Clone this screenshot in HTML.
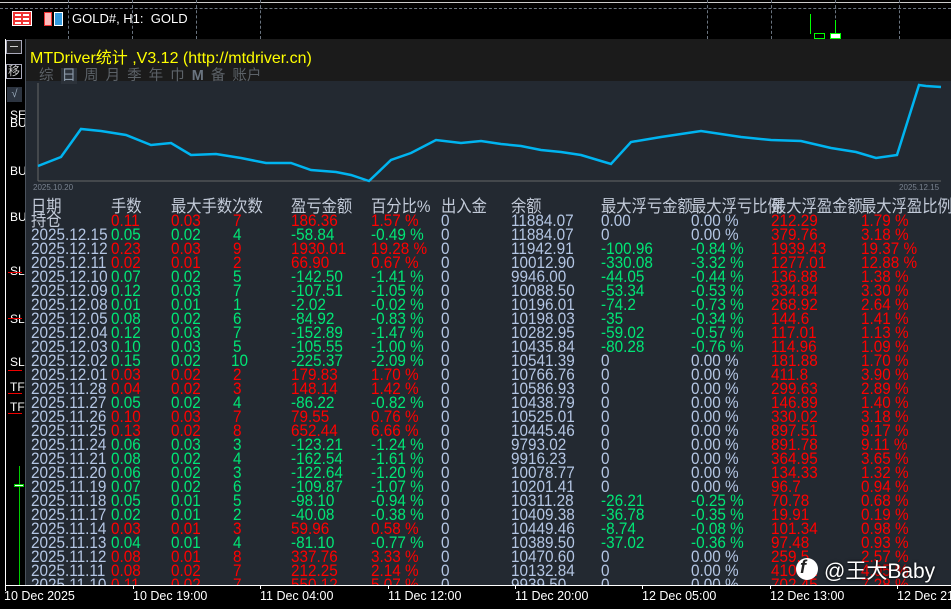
<!DOCTYPE html>
<html><head><meta charset="utf-8"><style>
*{margin:0;padding:0;box-sizing:border-box}
body{width:951px;height:609px;background:#000;position:relative;overflow:hidden;font-family:"Liberation Sans","Noto Sans CJK SC",sans-serif}
.a{position:absolute;white-space:nowrap}
.vd{position:absolute;top:0;height:39px;border-left:1px dashed #6a7480}
#panel{position:absolute;left:25px;top:39px;width:926px;height:546px;background:#232931;border-left:1px solid #4a525c;overflow:hidden}
.r{position:absolute;left:0;height:14px;width:926px;font-size:17px;line-height:14px}
.r span{position:absolute;top:0;transform:scaleX(0.9);transform-origin:left;white-space:nowrap}
.b{color:#b4c6e4}.g{color:#00e676}.d{color:#ff0000}
.h{color:#c2cad8}
.t{position:absolute;top:589px;color:#fff;font-size:12.5px;white-space:nowrap}
</style></head><body>
<div class="a" style="left:0;top:2px;width:951px;height:1px;background:#ccc"></div>
<div class="a" style="left:0;top:8px;width:951px;border-top:1px dashed #6a7480"></div>
<div class="vd" style="left:68px"></div><div class="vd" style="left:132px"></div><div class="vd" style="left:196px"></div><div class="vd" style="left:260px"></div><div class="vd" style="left:707px"></div><div class="vd" style="left:771px"></div><div class="vd" style="left:835px"></div><div class="vd" style="left:899px"></div>
<div class="a" style="left:12px;top:11px;width:20px;height:15px;background:#e33;border:1px solid #fff"></div>
<div class="a" style="left:15px;top:14px;width:6px;height:2px;background:#fff;box-shadow:0 4px #fff,0 8px #fff,8px 0 #fff,8px 4px #fff,8px 8px #fff"></div>
<div class="a" style="left:44px;top:12px;width:8px;height:14px;background:#fbb;border:1px solid #e33"></div>
<div class="a" style="left:54px;top:12px;width:9px;height:14px;background:#39d;border:1px solid #fff"></div>
<div class="a" style="left:72px;top:11px;color:#fff;font-size:13px">GOLD#, H1:&nbsp; GOLD</div>
<div class="a" style="left:810px;top:14px;width:1px;height:20px;background:#0f0"></div>
<div class="a" style="left:814px;top:33px;width:11px;height:6px;border:1px solid #0f0"></div>
<div class="a" style="left:830px;top:33px;width:11px;height:6px;border:1px solid #0f0;background:#fff"></div>
<div class="a" style="left:835px;top:20px;width:1px;height:13px;background:#0f0"></div>
<div class="a" style="left:5px;top:39px;width:1px;height:546px;background:#fff"></div>
<div class="a" style="left:6px;top:40px;width:16px;height:14px;border:1px solid #aab;background:#222"></div>
<div class="a" style="left:10px;top:46px;width:8px;height:1px;background:#ccc"></div>
<div class="a" style="left:6px;top:64px;width:16px;height:15px;border:1px solid #aab;color:#ccc;font-size:12px;line-height:13px;text-align:center">移</div>
<div class="a" style="left:7px;top:87px;width:15px;height:15px;background:#2c3440;color:#9ab;font-size:11px;line-height:15px;text-align:center">√</div>
<div class="a" style="left:10px;top:108px;color:#fff;font-size:12px">SE</div>
<div class="a" style="left:10px;top:116px;color:#fff;font-size:12px">BU</div>
<div class="a" style="left:10px;top:164px;color:#fff;font-size:12px">BU</div>
<div class="a" style="left:10px;top:210px;color:#fff;font-size:12px">BU</div>
<div class="a" style="left:10px;top:264px;color:#fff;font-size:12px">SL</div>
<div class="a" style="left:10px;top:312px;color:#fff;font-size:12px">SL</div>
<div class="a" style="left:10px;top:355px;color:#fff;font-size:12px">SL</div>
<div class="a" style="left:10px;top:380px;color:#fff;font-size:12px">TF</div>
<div class="a" style="left:10px;top:400px;color:#fff;font-size:12px">TF</div>
<div class="a" style="left:8px;top:272px;width:14px;height:1px;background:#e00"></div>
<div class="a" style="left:8px;top:318px;width:14px;height:1px;background:#e00"></div>
<div class="a" style="left:8px;top:370px;width:14px;height:1px;background:#e00"></div>
<div class="a" style="left:8px;top:393px;width:14px;height:1px;background:#e00"></div>
<div class="a" style="left:8px;top:413px;width:14px;height:1px;background:#e00"></div>
<div class="a" style="left:19px;top:466px;width:1px;height:120px;background:#0c0"></div>
<div class="a" style="left:14px;top:484px;width:10px;height:3px;background:#fff;border:1px solid #0c0"></div>

<div id="panel">
<div class="a" style="left:0;top:0;width:926px;height:42px;background:#1b1b1b"></div>
<div class="a" style="left:4px;top:5px;color:#ffff00;font-size:16px">MTDriver统计 ,V3.12 (http://mtdriver.cn)</div>
<div class="a" style="left:13px;top:25px;color:#5c6268;font-size:14.5px;word-spacing:3px">综 <span style="background:#2c323a;color:#8a98a8;padding:0 1px">日</span> 周 月 季 年 巾 <b style="color:#6a7480">M</b> 备 账户</div>
<svg class="a" style="left:0;top:42px" width="926" height="160">
<line x1="12" y1="2" x2="12" y2="100" stroke="#666" stroke-width="1"/>
<line x1="12" y1="100" x2="915" y2="100" stroke="#666" stroke-width="1"/>
<polyline fill="none" stroke="#00b4f0" stroke-width="2.5" points="12,85 35,76 55,48 75,50 100,54 125,64 145,62 165,74 190,73 215,77 240,82 265,82 285,89 310,91 325,94 343,100 365,79 385,72 410,59 435,62 455,60 475,63 495,65 515,69 535,71 555,74 575,80 585,83 605,61 635,56 675,50 715,56 745,59 775,60 805,67 830,71 850,77 871,74 893,4 900,5 915,6"/>
</svg>
<div class="a" style="left:7px;top:144px;color:#7a8390;font-size:8px">2025.10.20</div>
<div class="a" style="left:873px;top:144px;color:#7a8390;font-size:8px">2025.12.15</div>

<div class="r h" style="top:161px"><span style="left:5px">日期</span><span style="left:85px">手数</span><span style="left:145px">最大手数次数</span><span style="left:265px">盈亏金额</span><span style="left:345px">百分比%</span><span style="left:415px">出入金</span><span style="left:485px">余额</span><span style="left:575px">最大浮亏金额</span><span style="left:665px">最大浮亏比例</span><span style="left:745px">最大浮盈金额</span><span style="left:835px">最大浮盈比例</span></div>

<div class="r" style="top:175px"><span class="h" style="left:5px">持仓</span><span class="d" style="left:85px">0.11</span><span class="d" style="left:145px">0.03</span><span class="d" style="left:207px">7</span><span class="d" style="left:265px">186.36</span><span class="d" style="left:345px">1.57 %</span><span class="b" style="left:415px">0</span><span class="b" style="left:485px">11884.07</span><span class="b" style="left:575px">0.00</span><span class="b" style="left:665px">0.00 %</span><span class="d" style="left:745px">212.29</span><span class="d" style="left:835px">1.79 %</span></div>
<div class="r" style="top:189px"><span class="b" style="left:5px">2025.12.15</span><span class="g" style="left:85px">0.05</span><span class="g" style="left:145px">0.02</span><span class="g" style="left:207px">4</span><span class="g" style="left:265px">-58.84</span><span class="g" style="left:345px">-0.49 %</span><span class="b" style="left:415px">0</span><span class="b" style="left:485px">11884.07</span><span class="b" style="left:575px">0</span><span class="b" style="left:665px">0.00 %</span><span class="d" style="left:745px">379.76</span><span class="d" style="left:835px">3.18 %</span></div>
<div class="r" style="top:203px"><span class="b" style="left:5px">2025.12.12</span><span class="d" style="left:85px">0.23</span><span class="d" style="left:145px">0.03</span><span class="d" style="left:207px">9</span><span class="d" style="left:265px">1930.01</span><span class="d" style="left:345px">19.28 %</span><span class="b" style="left:415px">0</span><span class="b" style="left:485px">11942.91</span><span class="g" style="left:575px">-100.96</span><span class="g" style="left:665px">-0.84 %</span><span class="d" style="left:745px">1939.43</span><span class="d" style="left:835px">19.37 %</span></div>
<div class="r" style="top:217px"><span class="b" style="left:5px">2025.12.11</span><span class="d" style="left:85px">0.02</span><span class="d" style="left:145px">0.01</span><span class="d" style="left:207px">2</span><span class="d" style="left:265px">66.90</span><span class="d" style="left:345px">0.67 %</span><span class="b" style="left:415px">0</span><span class="b" style="left:485px">10012.90</span><span class="g" style="left:575px">-330.08</span><span class="g" style="left:665px">-3.32 %</span><span class="d" style="left:745px">1277.01</span><span class="d" style="left:835px">12.88 %</span></div>
<div class="r" style="top:231px"><span class="b" style="left:5px">2025.12.10</span><span class="g" style="left:85px">0.07</span><span class="g" style="left:145px">0.02</span><span class="g" style="left:207px">5</span><span class="g" style="left:265px">-142.50</span><span class="g" style="left:345px">-1.41 %</span><span class="b" style="left:415px">0</span><span class="b" style="left:485px">9946.00</span><span class="g" style="left:575px">-44.05</span><span class="g" style="left:665px">-0.44 %</span><span class="d" style="left:745px">136.88</span><span class="d" style="left:835px">1.38 %</span></div>
<div class="r" style="top:245px"><span class="b" style="left:5px">2025.12.09</span><span class="g" style="left:85px">0.12</span><span class="g" style="left:145px">0.03</span><span class="g" style="left:207px">7</span><span class="g" style="left:265px">-107.51</span><span class="g" style="left:345px">-1.05 %</span><span class="b" style="left:415px">0</span><span class="b" style="left:485px">10088.50</span><span class="g" style="left:575px">-53.34</span><span class="g" style="left:665px">-0.53 %</span><span class="d" style="left:745px">334.84</span><span class="d" style="left:835px">3.30 %</span></div>
<div class="r" style="top:259px"><span class="b" style="left:5px">2025.12.08</span><span class="g" style="left:85px">0.01</span><span class="g" style="left:145px">0.01</span><span class="g" style="left:207px">1</span><span class="g" style="left:265px">-2.02</span><span class="g" style="left:345px">-0.02 %</span><span class="b" style="left:415px">0</span><span class="b" style="left:485px">10196.01</span><span class="g" style="left:575px">-74.2</span><span class="g" style="left:665px">-0.73 %</span><span class="d" style="left:745px">268.92</span><span class="d" style="left:835px">2.64 %</span></div>
<div class="r" style="top:273px"><span class="b" style="left:5px">2025.12.05</span><span class="g" style="left:85px">0.08</span><span class="g" style="left:145px">0.02</span><span class="g" style="left:207px">6</span><span class="g" style="left:265px">-84.92</span><span class="g" style="left:345px">-0.83 %</span><span class="b" style="left:415px">0</span><span class="b" style="left:485px">10198.03</span><span class="g" style="left:575px">-35</span><span class="g" style="left:665px">-0.34 %</span><span class="d" style="left:745px">144.6</span><span class="d" style="left:835px">1.41 %</span></div>
<div class="r" style="top:287px"><span class="b" style="left:5px">2025.12.04</span><span class="g" style="left:85px">0.12</span><span class="g" style="left:145px">0.03</span><span class="g" style="left:207px">7</span><span class="g" style="left:265px">-152.89</span><span class="g" style="left:345px">-1.47 %</span><span class="b" style="left:415px">0</span><span class="b" style="left:485px">10282.95</span><span class="g" style="left:575px">-59.02</span><span class="g" style="left:665px">-0.57 %</span><span class="d" style="left:745px">117.01</span><span class="d" style="left:835px">1.13 %</span></div>
<div class="r" style="top:301px"><span class="b" style="left:5px">2025.12.03</span><span class="g" style="left:85px">0.10</span><span class="g" style="left:145px">0.03</span><span class="g" style="left:207px">5</span><span class="g" style="left:265px">-105.55</span><span class="g" style="left:345px">-1.00 %</span><span class="b" style="left:415px">0</span><span class="b" style="left:485px">10435.84</span><span class="g" style="left:575px">-80.28</span><span class="g" style="left:665px">-0.76 %</span><span class="d" style="left:745px">114.96</span><span class="d" style="left:835px">1.09 %</span></div>
<div class="r" style="top:315px"><span class="b" style="left:5px">2025.12.02</span><span class="g" style="left:85px">0.15</span><span class="g" style="left:145px">0.02</span><span class="g" style="left:205px">10</span><span class="g" style="left:265px">-225.37</span><span class="g" style="left:345px">-2.09 %</span><span class="b" style="left:415px">0</span><span class="b" style="left:485px">10541.39</span><span class="b" style="left:575px">0</span><span class="b" style="left:665px">0.00 %</span><span class="d" style="left:745px">181.88</span><span class="d" style="left:835px">1.70 %</span></div>
<div class="r" style="top:329px"><span class="b" style="left:5px">2025.12.01</span><span class="d" style="left:85px">0.03</span><span class="d" style="left:145px">0.02</span><span class="d" style="left:207px">2</span><span class="d" style="left:265px">179.83</span><span class="d" style="left:345px">1.70 %</span><span class="b" style="left:415px">0</span><span class="b" style="left:485px">10766.76</span><span class="b" style="left:575px">0</span><span class="b" style="left:665px">0.00 %</span><span class="d" style="left:745px">411.8</span><span class="d" style="left:835px">3.90 %</span></div>
<div class="r" style="top:343px"><span class="b" style="left:5px">2025.11.28</span><span class="d" style="left:85px">0.04</span><span class="d" style="left:145px">0.02</span><span class="d" style="left:207px">3</span><span class="d" style="left:265px">148.14</span><span class="d" style="left:345px">1.42 %</span><span class="b" style="left:415px">0</span><span class="b" style="left:485px">10586.93</span><span class="b" style="left:575px">0</span><span class="b" style="left:665px">0.00 %</span><span class="d" style="left:745px">299.63</span><span class="d" style="left:835px">2.89 %</span></div>
<div class="r" style="top:357px"><span class="b" style="left:5px">2025.11.27</span><span class="g" style="left:85px">0.05</span><span class="g" style="left:145px">0.02</span><span class="g" style="left:207px">4</span><span class="g" style="left:265px">-86.22</span><span class="g" style="left:345px">-0.82 %</span><span class="b" style="left:415px">0</span><span class="b" style="left:485px">10438.79</span><span class="b" style="left:575px">0</span><span class="b" style="left:665px">0.00 %</span><span class="d" style="left:745px">146.89</span><span class="d" style="left:835px">1.40 %</span></div>
<div class="r" style="top:371px"><span class="b" style="left:5px">2025.11.26</span><span class="d" style="left:85px">0.10</span><span class="d" style="left:145px">0.03</span><span class="d" style="left:207px">7</span><span class="d" style="left:265px">79.55</span><span class="d" style="left:345px">0.76 %</span><span class="b" style="left:415px">0</span><span class="b" style="left:485px">10525.01</span><span class="b" style="left:575px">0</span><span class="b" style="left:665px">0.00 %</span><span class="d" style="left:745px">330.02</span><span class="d" style="left:835px">3.18 %</span></div>
<div class="r" style="top:385px"><span class="b" style="left:5px">2025.11.25</span><span class="d" style="left:85px">0.13</span><span class="d" style="left:145px">0.02</span><span class="d" style="left:207px">8</span><span class="d" style="left:265px">652.44</span><span class="d" style="left:345px">6.66 %</span><span class="b" style="left:415px">0</span><span class="b" style="left:485px">10445.46</span><span class="b" style="left:575px">0</span><span class="b" style="left:665px">0.00 %</span><span class="d" style="left:745px">897.51</span><span class="d" style="left:835px">9.17 %</span></div>
<div class="r" style="top:399px"><span class="b" style="left:5px">2025.11.24</span><span class="g" style="left:85px">0.06</span><span class="g" style="left:145px">0.03</span><span class="g" style="left:207px">3</span><span class="g" style="left:265px">-123.21</span><span class="g" style="left:345px">-1.24 %</span><span class="b" style="left:415px">0</span><span class="b" style="left:485px">9793.02</span><span class="b" style="left:575px">0</span><span class="b" style="left:665px">0.00 %</span><span class="d" style="left:745px">891.78</span><span class="d" style="left:835px">9.11 %</span></div>
<div class="r" style="top:413px"><span class="b" style="left:5px">2025.11.21</span><span class="g" style="left:85px">0.08</span><span class="g" style="left:145px">0.02</span><span class="g" style="left:207px">4</span><span class="g" style="left:265px">-162.54</span><span class="g" style="left:345px">-1.61 %</span><span class="b" style="left:415px">0</span><span class="b" style="left:485px">9916.23</span><span class="b" style="left:575px">0</span><span class="b" style="left:665px">0.00 %</span><span class="d" style="left:745px">364.95</span><span class="d" style="left:835px">3.65 %</span></div>
<div class="r" style="top:427px"><span class="b" style="left:5px">2025.11.20</span><span class="g" style="left:85px">0.06</span><span class="g" style="left:145px">0.02</span><span class="g" style="left:207px">3</span><span class="g" style="left:265px">-122.64</span><span class="g" style="left:345px">-1.20 %</span><span class="b" style="left:415px">0</span><span class="b" style="left:485px">10078.77</span><span class="b" style="left:575px">0</span><span class="b" style="left:665px">0.00 %</span><span class="d" style="left:745px">134.33</span><span class="d" style="left:835px">1.32 %</span></div>
<div class="r" style="top:441px"><span class="b" style="left:5px">2025.11.19</span><span class="g" style="left:85px">0.07</span><span class="g" style="left:145px">0.02</span><span class="g" style="left:207px">6</span><span class="g" style="left:265px">-109.87</span><span class="g" style="left:345px">-1.07 %</span><span class="b" style="left:415px">0</span><span class="b" style="left:485px">10201.41</span><span class="b" style="left:575px">0</span><span class="b" style="left:665px">0.00 %</span><span class="d" style="left:745px">96.7</span><span class="d" style="left:835px">0.94 %</span></div>
<div class="r" style="top:455px"><span class="b" style="left:5px">2025.11.18</span><span class="g" style="left:85px">0.05</span><span class="g" style="left:145px">0.01</span><span class="g" style="left:207px">5</span><span class="g" style="left:265px">-98.10</span><span class="g" style="left:345px">-0.94 %</span><span class="b" style="left:415px">0</span><span class="b" style="left:485px">10311.28</span><span class="g" style="left:575px">-26.21</span><span class="g" style="left:665px">-0.25 %</span><span class="d" style="left:745px">70.78</span><span class="d" style="left:835px">0.68 %</span></div>
<div class="r" style="top:469px"><span class="b" style="left:5px">2025.11.17</span><span class="g" style="left:85px">0.02</span><span class="g" style="left:145px">0.01</span><span class="g" style="left:207px">2</span><span class="g" style="left:265px">-40.08</span><span class="g" style="left:345px">-0.38 %</span><span class="b" style="left:415px">0</span><span class="b" style="left:485px">10409.38</span><span class="g" style="left:575px">-36.78</span><span class="g" style="left:665px">-0.35 %</span><span class="d" style="left:745px">19.91</span><span class="d" style="left:835px">0.19 %</span></div>
<div class="r" style="top:483px"><span class="b" style="left:5px">2025.11.14</span><span class="d" style="left:85px">0.03</span><span class="d" style="left:145px">0.01</span><span class="d" style="left:207px">3</span><span class="d" style="left:265px">59.96</span><span class="d" style="left:345px">0.58 %</span><span class="b" style="left:415px">0</span><span class="b" style="left:485px">10449.46</span><span class="g" style="left:575px">-8.74</span><span class="g" style="left:665px">-0.08 %</span><span class="d" style="left:745px">101.34</span><span class="d" style="left:835px">0.98 %</span></div>
<div class="r" style="top:497px"><span class="b" style="left:5px">2025.11.13</span><span class="g" style="left:85px">0.04</span><span class="g" style="left:145px">0.01</span><span class="g" style="left:207px">4</span><span class="g" style="left:265px">-81.10</span><span class="g" style="left:345px">-0.77 %</span><span class="b" style="left:415px">0</span><span class="b" style="left:485px">10389.50</span><span class="g" style="left:575px">-37.02</span><span class="g" style="left:665px">-0.36 %</span><span class="d" style="left:745px">97.48</span><span class="d" style="left:835px">0.93 %</span></div>
<div class="r" style="top:511px"><span class="b" style="left:5px">2025.11.12</span><span class="d" style="left:85px">0.08</span><span class="d" style="left:145px">0.01</span><span class="d" style="left:207px">8</span><span class="d" style="left:265px">337.76</span><span class="d" style="left:345px">3.33 %</span><span class="b" style="left:415px">0</span><span class="b" style="left:485px">10470.60</span><span class="b" style="left:575px">0</span><span class="b" style="left:665px">0.00 %</span><span class="d" style="left:745px">259.5</span><span class="d" style="left:835px">2.57 %</span></div>
<div class="r" style="top:525px"><span class="b" style="left:5px">2025.11.11</span><span class="d" style="left:85px">0.08</span><span class="d" style="left:145px">0.02</span><span class="d" style="left:207px">7</span><span class="d" style="left:265px">212.25</span><span class="d" style="left:345px">2.14 %</span><span class="b" style="left:415px">0</span><span class="b" style="left:485px">10132.84</span><span class="b" style="left:575px">0</span><span class="b" style="left:665px">0.00 %</span><span class="d" style="left:745px">410.12</span><span class="d" style="left:835px">4.05 %</span></div>
<div class="r" style="top:539px"><span class="b" style="left:5px">2025.11.10</span><span class="d" style="left:85px">0.11</span><span class="d" style="left:145px">0.02</span><span class="d" style="left:207px">7</span><span class="d" style="left:265px">550.12</span><span class="d" style="left:345px">5.07 %</span><span class="b" style="left:415px">0</span><span class="b" style="left:485px">9939.50</span><span class="b" style="left:575px">0</span><span class="b" style="left:665px">0.00 %</span><span class="d" style="left:745px">702.45</span><span class="d" style="left:835px">7.28 %</span></div>
</div>

<div class="a" style="left:796px;top:558px;width:22px;height:22px;border-radius:50%;background:#fff"></div>
<div class="a" style="left:800px;top:557px;color:#222;font-size:18px;font-weight:bold;font-style:italic">f</div>
<div class="a" style="left:824px;top:555px;color:#fff;font-size:21px;text-shadow:0 0 3px #000">@王大Baby</div>

<div class="a" style="left:5px;top:585px;width:946px;height:1px;background:#fff"></div>
<div class="a" style="left:5px;top:585px;width:1px;height:6px;background:#fff"></div>
<div class="a" style="left:133px;top:585px;width:1px;height:4px;background:#fff"></div>
<div class="a" style="left:260px;top:585px;width:1px;height:4px;background:#fff"></div>
<div class="a" style="left:388px;top:585px;width:1px;height:4px;background:#fff"></div>
<div class="a" style="left:515px;top:585px;width:1px;height:4px;background:#fff"></div>
<div class="a" style="left:642px;top:585px;width:1px;height:4px;background:#fff"></div>
<div class="a" style="left:770px;top:585px;width:1px;height:4px;background:#fff"></div>
<div class="a" style="left:897px;top:585px;width:1px;height:4px;background:#fff"></div>
<div class="t" style="left:4px">10 Dec 2025</div>
<div class="t" style="left:133px">10 Dec 19:00</div>
<div class="t" style="left:260px">11 Dec 04:00</div>
<div class="t" style="left:388px">11 Dec 12:00</div>
<div class="t" style="left:515px">11 Dec 20:00</div>
<div class="t" style="left:642px">12 Dec 05:00</div>
<div class="t" style="left:770px">12 Dec 13:00</div>
<div class="t" style="left:897px">12 Dec 21:00</div>
</body></html>
